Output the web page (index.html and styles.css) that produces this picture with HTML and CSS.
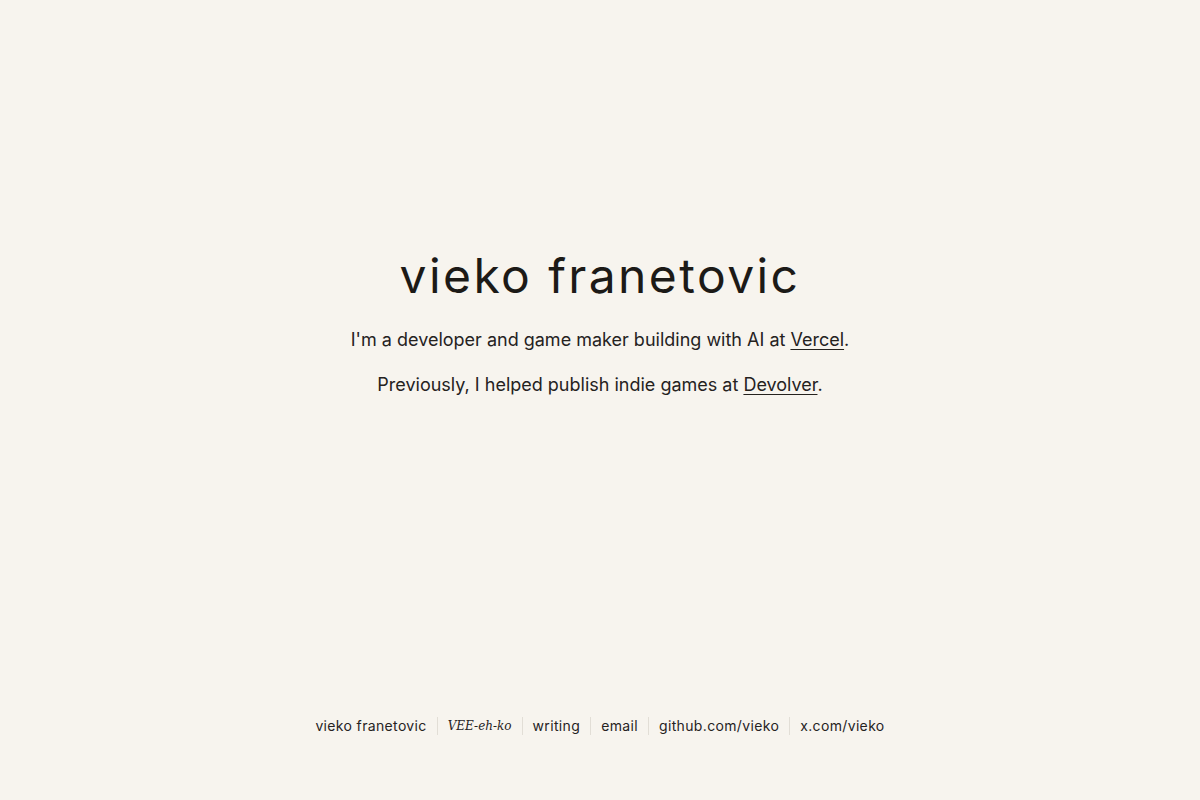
FILE: index.html
```html
<!DOCTYPE html>
<html lang="en">
<head>
<meta charset="utf-8">
<title>vieko franetovic</title>
<link rel="stylesheet" href="styles.css">
</head>
<body>
<div class="page">
  <main class="hero">
    <h1 class="title">vieko franetovic</h1>
    <p class="line">I'm a developer and game maker building with AI at <a href="#">Vercel</a>.</p>
    <p class="line">Previously, I helped publish indie games at <a href="#">Devolver</a>.</p>
  </main>
  <footer class="footer">
    <span class="item">vieko franetovic</span>
    <span class="item pron">VEE-eh-ko</span>
    <a class="item" href="#">writing</a>
    <a class="item" href="#">email</a>
    <a class="item" href="#">github.com/vieko</a>
    <a class="item" href="#">x.com/vieko</a>
  </footer>
</div>
</body>
</html>
```
FILE: styles.css
```css
html, body {
  margin: 0;
  padding: 0;
}
body {
  background: #f7f4ee;
  color: #1c1a17;
  font-family: Inter, "Noto Sans", sans-serif;
}
.page {
  height: 800px;
  display: flex;
  flex-direction: column;
  align-items: center;
}
.hero {
  margin-top: 246px;
  display: flex;
  flex-direction: column;
  align-items: center;
}
.title {
  margin: 0;
  font-size: 48px;
  font-weight: 400;
  letter-spacing: 0.05em;
  line-height: 60px;
}
.line {
  margin: 0;
  font-size: 18px;
  line-height: 28px;
  color: #25221e;
}
.title + .line {
  margin-top: 20px;
}
.line + .line {
  margin-top: 17px;
}
.line a {
  color: inherit;
  text-decoration: underline;
  text-underline-offset: 3px;
  text-decoration-thickness: 1px;
}
.footer {
  margin-top: auto;
  margin-bottom: 65px;
  display: flex;
  align-items: center;
  font-size: 14px;
  line-height: 18px;
  letter-spacing: 0.025em;
  color: #26231f;
}
.item {
  color: inherit;
  text-decoration: none;
  padding: 0 10px;
  border-left: 1px solid #e2ded6;
}
.item:first-child {
  border-left: none;
}
.pron {
  font-family: "DejaVu Serif", "Liberation Serif", serif;
  font-style: italic;
  font-size: 12px;
  letter-spacing: 0;
}
```
